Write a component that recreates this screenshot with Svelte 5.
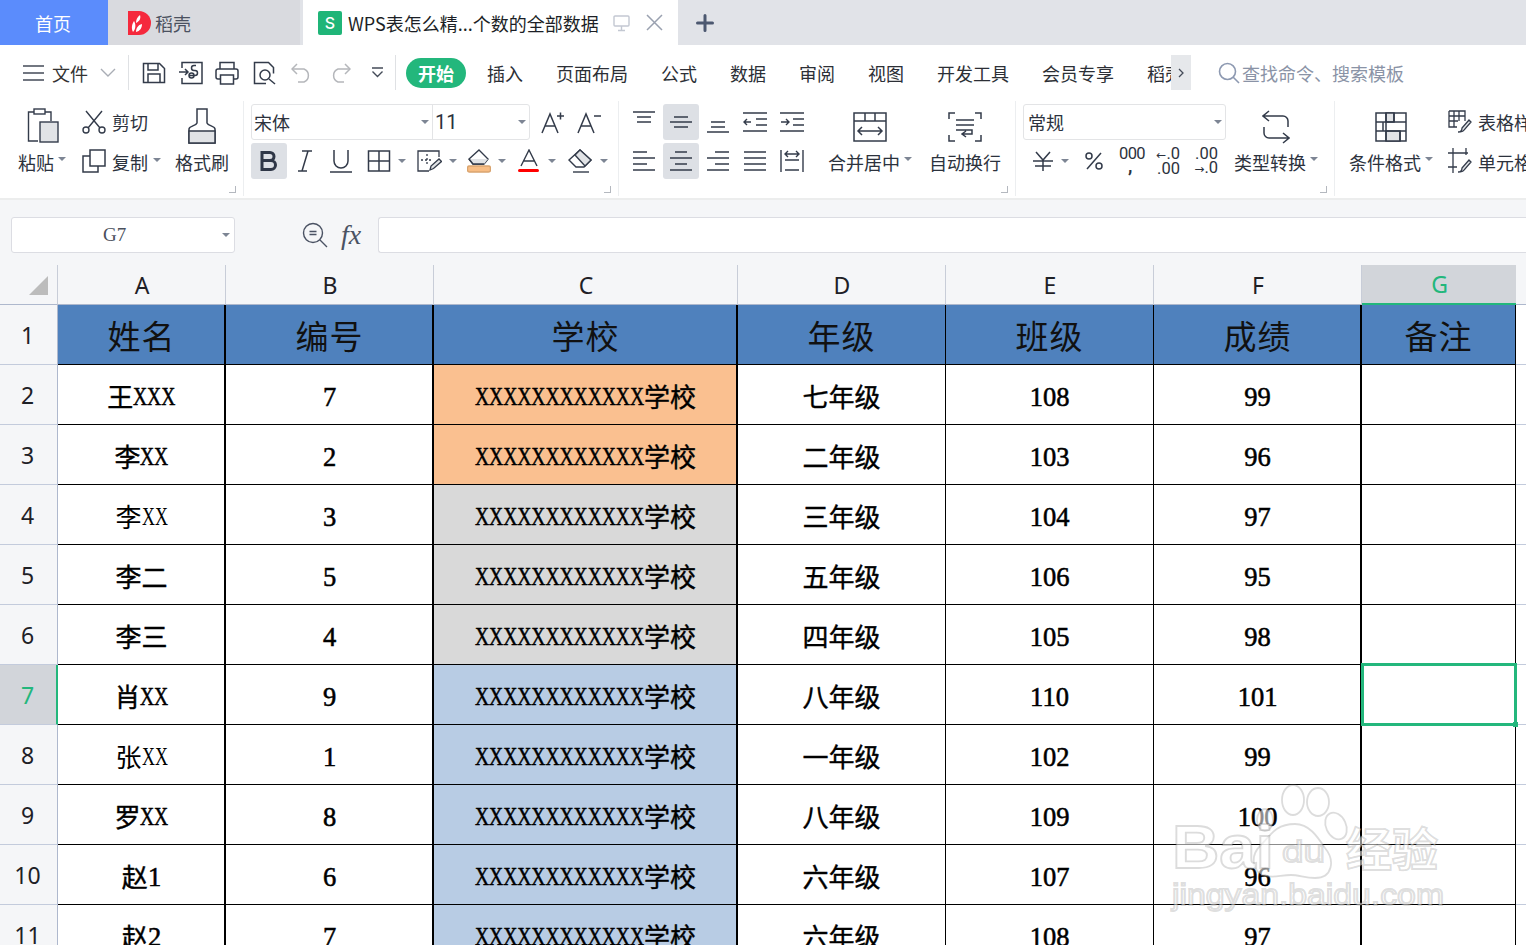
<script>
  const header = ['姓名', '编号', '学校', '年级', '班级', '成绩', '备注'];
  const school = 'XXXXXXXXXXXX学校';
  const rows = [
    { n: 2, a: '王XXX', b: '7', c: 'o', d: '七年级', e: '108', f: '99' },
    { n: 3, a: '李XX', b: '2', c: 'o', d: '二年级', e: '103', f: '96' },
    { n: 4, a: '李XX', b: '3', c: 'g', d: '三年级', e: '104', f: '97', thin: true },
    { n: 5, a: '李二', b: '5', c: 'g', d: '五年级', e: '106', f: '95' },
    { n: 6, a: '李三', b: '4', c: 'g', d: '四年级', e: '105', f: '98' },
    { n: 7, a: '肖XX', b: '9', c: 'b', d: '八年级', e: '110', f: '101', sel: true },
    { n: 8, a: '张XX', b: '1', c: 'b', d: '一年级', e: '102', f: '99', thin: true },
    { n: 9, a: '罗XX', b: '8', c: 'b', d: '八年级', e: '109', f: '100' },
    { n: 10, a: '赵1', b: '6', c: 'b', d: '六年级', e: '107', f: '96' },
    { n: 11, a: '赵2', b: '7', c: 'b', d: '六年级', e: '108', f: '97' }
  ];
  const cols = ['A', 'B', 'C', 'D', 'E', 'F', 'G'];
  const parts = (s) => s.split(/(X+|[0-9]+)/).filter(Boolean);
  const menus = ['插入', '页面布局', '公式', '数据', '审阅', '视图', '开发工具', '会员专享'];
</script>

{#snippet txt(s, thin)}
  {#each parts(s) as p}
    {#if p[0] === 'X'}
      <span class="xs" style="width:{p.length * (thin ? 13 : 14.1)}px"><span class="xi" class:xthin={thin}>{p}</span></span>
    {:else if /^[0-9]+$/.test(p)}
      <span class="num">{p}</span>
    {:else}
      <span class="cn" class:cnthin={thin}>{p}</span>
    {/if}
  {/each}
{/snippet}

<div class="page">
  <div class="tabs">
    <div class="tab home">首页</div>
    <div class="tab shell">
      <svg class="logo" width="24" height="24" viewBox="0 0 24 24"><path d="M0 0h11a12 12 0 0 1 0 24H0z" fill="#f5293d"/><path d="M5 21c-2-4-1-8 1-11 2 3 2 8-1 11zM8 21c0-4 2-7 6-8 0 4-2 7-6 8zM8 12c0-3 1-6 4-8 1 3 0 6-4 8z" fill="#fff"/></svg>
      <span>稻壳</span>
    </div>
    <div class="tab active">
      <span class="slogo">S</span>
      <span class="ttl">WPS表怎么精...个数的全部数据</span>
      <svg class="mon" width="18" height="18" viewBox="0 0 18 18" fill="none" stroke="#c3c8d2" stroke-width="1.4"><rect x="1" y="2" width="15" height="10" rx="1"/><path d="M8.5 12v4M5 16.5h7"/></svg>
      <svg class="cls" width="17" height="17" viewBox="0 0 17 17" fill="none" stroke="#9aa1b0" stroke-width="1.5"><path d="M1 1l15 15M16 1L1 16"/></svg>
    </div>
    <svg class="plus" width="18" height="18" viewBox="0 0 18 18" stroke="#4c5870" stroke-width="3" stroke-linecap="round"><path d="M9 1.5v15M1.5 9h15"/></svg>
  </div>

  <div class="menu">
    <svg class="m-ham" width="22" height="16" viewBox="0 0 22 16" stroke="#444b58" stroke-width="1.4"><path d="M0 1h21M0 8h21M0 15h21"/></svg>
    <span class="m-file">文件</span>
    <svg class="m-chev" width="16" height="9" viewBox="0 0 16 9" fill="none" stroke="#a9adb5" stroke-width="1.4"><path d="M1 1l7 7 7-7"/></svg>
    <i class="m-sep s1"></i>
    <svg class="qa q1" width="24" height="24" viewBox="0 0 24 24" fill="none" stroke="#333b4a" stroke-width="1.5"><path d="M1.5 2.5h16l5 5v14h-21z"/><path d="M6 3v6h10V3M6 21v-8h12v8"/></svg>
    <svg class="qa q2" width="25" height="24" viewBox="0 0 25 24" fill="none" stroke="#333b4a" stroke-width="1.5"><path d="M3 7V1.500h20v21H3V17"/><path d="M0 11h9M6 8l3 3-3 3"/><path d="M10 14.500h6a2.500 2.500 0 0 0 0-5h-1a2.500 2.500 0 0 1 0-5h2M10 14.500a2.500 2.500 0 1 0 5 0 2.500 2.500 0 1 0-5 0"/></svg>
    <svg class="qa q3" width="24" height="24" viewBox="0 0 24 24" fill="none" stroke="#333b4a" stroke-width="1.5"><path d="M5 8V1.500h14V8"/><rect x="1" y="8" width="22" height="10" rx="2"/><path d="M5.500 14h13v9h-13z" fill="#fff"/></svg>
    <svg class="qa q4" width="24" height="24" viewBox="0 0 24 24" fill="none" stroke="#333b4a" stroke-width="1.5"><path d="M13 22.500H1.500v-21h14l5 5v6"/><circle cx="12" cy="14" r="5"/><path d="M16 18l6 5"/></svg>
    <svg class="qa q5" width="22" height="20" viewBox="0 0 22 20" fill="none" stroke="#b5b7bb" stroke-width="1.5"><path d="M6 1L1 6l5 5"/><path d="M1 6h12a7 7 0 0 1 0 13H7"/></svg>
    <svg class="qa q6" width="22" height="20" viewBox="0 0 22 20" fill="none" stroke="#b5b7bb" stroke-width="1.500"><path d="M16 1l5 5-5 5"/><path d="M21 6H9a7 7 0 0 0 0 13h6"/></svg>
    <svg class="qa q7" width="13" height="11" viewBox="0 0 13 11" fill="none" stroke="#444b58" stroke-width="1.4"><path d="M1 1h11M1.500 4.500l5 5 5-5"/></svg>
    <i class="m-sep s2"></i>
    <span class="pill">开始</span>
    <div class="m-items">
      {#each menus as m}<span>{m}</span>{/each}
      <span class="clip">稻壳</span>
    </div>
    <span class="more"><svg width="6" height="10" viewBox="0 0 6 10" fill="none" stroke="#444b58" stroke-width="1.300"><path d="M1 1l4 4-4 4"/></svg></span>
    <svg class="s-ic" width="22" height="22" viewBox="0 0 22 22" fill="none" stroke="#8d99b1" stroke-width="1.600"><circle cx="9.500" cy="9.500" r="8"/><path d="M15 15l6 6"/></svg>
    <span class="s-tx">查找命令、搜索模板</span>
  </div>

  <div class="ribbon">
    <section class="grp g1">
      <div class="big c-paste">
        <svg class="ic" width="32" height="36" viewBox="0 0 32 36" fill="none" stroke="#333b4a" stroke-width="1.400"><path d="M11 33H1.500V4H24v9"/><rect x="7" y="1" width="11" height="5" fill="#fff"/><rect x="13" y="14" width="18" height="20" fill="#e1e3e6"/></svg>
        <div class="lb">粘贴<i class="car"></i></div>
      </div>
      <div class="c-cut">
        <div class="ln"><svg width="24" height="24" viewBox="0 0 24 24" fill="none" stroke="#333b4a" stroke-width="1.400"><circle cx="4" cy="20" r="3"/><circle cx="20" cy="20" r="3"/><path d="M6 18L20 1M18 18L4 1"/></svg><span>剪切</span></div>
        <div class="ln"><svg width="24" height="24" viewBox="0 0 24 24" fill="none" stroke="#333b4a" stroke-width="1.500"><rect x="8" y="1" width="15" height="16"/><path d="M8 7H1v16h15v-6"/></svg><span class="dn">复制</span><i class="car"></i></div>
      </div>
      <div class="big c-brush">
        <svg class="ic" width="28" height="36" viewBox="0 0 28 36" fill="none" stroke="#333b4a" stroke-width="1.500"><path d="M1 35V21c0-3 7-3 8-6V1h10v14c1 3 8 3 8 6v14z"/><path d="M1 23h26v12H1z" fill="#e1e3e6"/></svg>
        <div class="lb">格式刷</div>
      </div>
      <i class="corner"></i>
    </section>

    <section class="grp g2">
      <div class="ln1">
        <div class="fbox">
          <div class="f-name"><span>宋体</span><i class="car"></i></div>
          <div class="f-size"><span>11</span><i class="car"></i></div>
        </div>
        <svg class="a-up" width="24" height="24" viewBox="0 0 24 24" fill="none" stroke="#333b4a" stroke-width="1.500"><path d="M1 23L9 4l8 19M4 16h10M16 6h7M19.500 2.500v7"/></svg>
        <svg class="a-dn" width="24" height="24" viewBox="0 0 24 24" fill="none" stroke="#333b4a" stroke-width="1.500"><path d="M1 23L9 4l8 19M4 16h10M17 6h7"/></svg>
      </div>
      <div class="ln2">
        <span class="b36 on"><svg width="18" height="20" viewBox="0 0 18 20" fill="none" stroke="#2f3747" stroke-width="3"><path d="M2 1.500h8a4 4 0 0 1 0 8H2zM2 9.500h9a4.500 4.500 0 0 1 0 9H2z"/></svg></span>
        <span class="b36"><svg width="14" height="22" viewBox="0 0 14 22" fill="none" stroke="#333b4a" stroke-width="1.500"><path d="M4 1h10M0 21h9M10 1L4 21"/></svg></span>
        <span class="b36"><svg width="22" height="24" viewBox="0 0 22 24" fill="none" stroke="#333b4a" stroke-width="1.500"><path d="M4 1v11a7 7 0 0 0 14 0V1M0 23h22"/></svg></span>
        <span class="b50"><svg width="24" height="24" viewBox="0 0 24 24" fill="none" stroke="#333b4a" stroke-width="1.500"><rect x="1.500" y="2" width="21" height="20"/><path d="M12 2v20M1.500 12h21"/></svg><i class="car"></i></span>
        <span class="b50"><svg width="25" height="24" viewBox="0 0 25 24" fill="none" stroke="#333b4a" stroke-width="1.300"><path d="M12 22H1V2h21v6"/><path d="M4 11h12M10 5v12" stroke-dasharray="2 2"/><path d="M13 21l1-4 8-7 2.500 2.500-8 7z" fill="#e1e3e6"/></svg><i class="car"></i></span>
        <span class="b50"><svg width="24" height="24" viewBox="0 0 24 24" fill="none" stroke="#333b4a" stroke-width="1.400"><path d="M12 1l9 9-4 5H6l-4-5z"/><path d="M3 10h18l-4 5H6z" fill="#e1e3e6" stroke="none"/><path d="M2 10l4 5h11"/><rect x="0.500" y="17" width="23" height="6" rx="2" fill="#f8bd84" stroke="#d9a46f"/></svg><i class="car"></i></span>
        <span class="b50"><svg width="24" height="24" viewBox="0 0 24 24" fill="none"><path d="M4 17L12 1l8 16M6 12h12" stroke="#333b4a" stroke-width="1.400"/><rect x="1" y="20" width="21" height="3" rx="1.500" fill="#f00"/></svg><i class="car"></i></span>
        <span class="b50"><svg width="26" height="24" viewBox="0 0 26 24" fill="none" stroke="#333b4a" stroke-width="1.400"><path d="M13 1l11 10-7 7H9l-7-7z"/><path d="M8 6l10 11 6-6-11-10z" fill="#e1e3e6"/><path d="M6 23h16"/></svg><i class="car"></i></span>
      </div>
      <i class="corner"></i>
    </section>

    <section class="grp g3">
      <div class="agrid">
        <span><svg width="22" height="14" viewBox="0 0 22 14" stroke="#333b4a" stroke-width="1.400"><path d="M0 1h22M4 6h14M4 11h14"/></svg></span>
        <span class="on"><svg width="22" height="14" viewBox="0 0 22 14" stroke="#333b4a" stroke-width="1.400"><path d="M4 2h14M0 7h22M4 12h14"/></svg></span>
        <span class="low"><svg width="22" height="14" viewBox="0 0 22 14" stroke="#333b4a" stroke-width="1.400"><path d="M4 3h14M4 8h14M0 13h22"/></svg></span>
        <span><svg width="24" height="20" viewBox="0 0 24 20" fill="none" stroke="#333b4a" stroke-width="1.400"><path d="M0 1h24M13 7h11M13 13h11M0 19h24M8 10H1M4 7l-3 3 3 3"/></svg></span>
        <span><svg width="24" height="20" viewBox="0 0 24 20" fill="none" stroke="#333b4a" stroke-width="1.400"><path d="M0 1h24M13 7h11M13 13h11M0 19h24M1 10h8M6 7l3 3-3 3"/></svg></span>
        <span><svg width="22" height="20" viewBox="0 0 22 20" stroke="#333b4a" stroke-width="1.400"><path d="M0 1h14M0 7h22M0 13h14M0 19h22"/></svg></span>
        <span class="on"><svg width="22" height="20" viewBox="0 0 22 20" stroke="#333b4a" stroke-width="1.400"><path d="M5 1h12M0 7h22M5 13h12M0 19h22"/></svg></span>
        <span><svg width="22" height="20" viewBox="0 0 22 20" stroke="#333b4a" stroke-width="1.400"><path d="M8 1h14M0 7h22M8 13h14M0 19h22"/></svg></span>
        <span><svg width="22" height="20" viewBox="0 0 22 20" stroke="#333b4a" stroke-width="1.400"><path d="M0 1h22M0 7h22M0 13h22M0 19h22"/></svg></span>
        <span><svg width="24" height="22" viewBox="0 0 24 22" fill="none" stroke="#333b4a" stroke-width="1.400"><path d="M1 0v22M23 0v22M5 10h14M5 20h14M6 4h12M8 1L5 4l3 3M16 1l3 3-3 3"/></svg></span>
      </div>
      <div class="big c-merge">
        <svg class="ic low8" width="34" height="30" viewBox="0 0 34 30" fill="none" stroke="#333b4a" stroke-width="1.500"><rect x="1" y="1" width="32" height="28"/><path d="M1 9h32M12 1v8M22 1v8M5 19h24M9 15l-4 4 4 4M25 15l4 4-4 4"/></svg>
        <div class="lb">合并居中<i class="car"></i></div>
      </div>
      <div class="big c-wrap">
        <svg class="ic low8" width="34" height="30" viewBox="0 0 34 30" fill="none" stroke="#333b4a" stroke-width="1.500"><path d="M7 1H1v6M27 1h6v6M7 29H1v-6M27 29h6v-6M8 8h18M8 13h18M8 18h16v4h-9M18 19l-4 3 4 3"/></svg>
        <div class="lb">自动换行</div>
      </div>
      <i class="corner"></i>
    </section>

    <section class="grp g4">
      <div class="c-num">
        <div class="fbox nb"><span>常规</span><i class="car"></i></div>
        <div class="nrow">
          <span class="n-y"><svg width="20" height="20" viewBox="0 0 20 20" fill="none" stroke="#333b4a" stroke-width="1.500"><path d="M3 1l7 8 7-8M0 10h20M2 15h16M10 9v11"/></svg><i class="car"></i></span>
          <span class="n-p"><svg width="18" height="18" viewBox="0 0 18 18" fill="none" stroke="#333b4a" stroke-width="1.500"><circle cx="4" cy="4" r="3"/><circle cx="14" cy="14" r="3"/><path d="M16 1L2 17"/></svg></span>
          <span class="n-k"><b>000</b><b class="cm">,</b></span>
          <span class="n-d"><b><em>←</em>.0</b><b>.00</b></span>
          <span class="n-d n-i"><b>.00</b><b><em>→</em>.0</b></span>
        </div>
      </div>
      <div class="big c-conv">
        <svg class="ic low2" width="28" height="34" viewBox="0 0 28 34" fill="none" stroke="#333b4a" stroke-width="1.500"><path d="M7 1L1 6l6 5M1 6h20a5 5 0 0 1 5 5v6M21 33l6-5-6-5M27 28H7a5 5 0 0 1-5-5v-6"/></svg>
        <div class="lb">类型转换<i class="car"></i></div>
      </div>
      <i class="corner"></i>
    </section>

    <section class="grp g5">
      <div class="big c-cond">
        <svg class="ic low8" width="32" height="30" viewBox="0 0 32 30" fill="none" stroke="#333b4a" stroke-width="1.500"><rect x="1" y="1" width="30" height="28"/><path d="M11 1h8v9h-8zM11 19h14v10H11z" fill="#e1e3e6"/><path d="M1 10h30M1 19h30M11 1v28M19 1v9M8 10v9M25 19v10"/></svg>
        <div class="lb">条件格式<i class="car"></i></div>
      </div>
      <div class="c-tbl">
        <div class="ln"><svg width="24" height="24" viewBox="0 0 24 24" fill="none" stroke="#333b4a" stroke-width="1.300"><path d="M1 1h16v10M1 1v16h8M1 6h16M1 11h9M6 1v16M11 1v10"/><path d="M10 22c3 0 4-1 4-4l7-8 2 2-7 8c-1 2-3 2-6 2z" fill="#e1e3e6"/></svg><span class="sty">表格样式</span></div>
        <div class="ln"><svg width="24" height="26" viewBox="0 0 24 26" fill="none" stroke="#333b4a" stroke-width="1.300"><path d="M0 5h20M0 19h9M5 0v25M18 0v7"/><path d="M10 24c3 0 4-1 4-4l7-8 2 2-7 8c-1 2-3 2-6 2z" fill="#e1e3e6"/></svg><span class="sty dn">单元格样式</span></div>
      </div>
    </section>
  </div>

  <div class="fbar">
    <div class="namebox"><span>G7</span><i class="car"></i></div>
    <svg class="z-ic" width="26" height="26" viewBox="0 0 26 26" fill="none" stroke="#4a5263" stroke-width="1.400"><circle cx="11" cy="11" r="9.500"/><path d="M7.500 9.500h7M7.500 12.500h7M18 18l7 7"/></svg>
    <span class="fx">fx</span>
    <div class="finput"></div>
  </div>

  <div class="sheet">
    <div class="hc corner-c"><i class="tri"></i></div>
    {#each cols as c}
      <div class="hc ch" class:gc={c === 'G'}>{c}</div>
    {/each}
    <div class="hc tail"></div>

    <div class="rh">1</div>
    {#each header as h, i}
      <div class="cell head v{i}">{h}</div>
    {/each}
    <div class="tailc"></div>

    {#each rows as r}
      <div class="rh" class:cur={r.sel}>{r.n}</div>
      <div class="cell v0 data">{@render txt(r.a, r.thin)}</div>
      <div class="cell v1 data">{@render txt(r.b)}</div>
      <div class="cell v2 data {r.c}">{@render txt(school)}</div>
      <div class="cell v3 data">{@render txt(r.d)}</div>
      <div class="cell v4 data">{@render txt(r.e)}</div>
      <div class="cell v5 data">{@render txt(r.f)}</div>
      <div class="cell v6 data">
        {#if r.sel}<i class="selbox"><i class="handle"></i></i>{/if}
      </div>
      <div class="tailc"></div>
    {/each}
  </div>

  <svg class="wm" width="300" height="150" viewBox="0 0 300 150">
    <g fill="rgba(255,255,255,.55)" stroke="rgba(110,110,110,.24)" stroke-width="1.800">
      <ellipse cx="133" cy="22" rx="11" ry="15"/>
      <ellipse cx="158" cy="24" rx="11" ry="14"/>
      <ellipse cx="176" cy="48" rx="10" ry="14" transform="rotate(-25 176 48)"/>
      <ellipse cx="105" cy="42" rx="8" ry="11"/>
      <path d="M135 46c14 0 22 12 30 24 10 12 8 30-10 30-10 0-16-3-24-3-10 0-16 3-25 1-14-3-16-20-6-30 10-10 15-22 35-22z"/>
      <text x="12" y="90" font-family="'Liberation Sans',sans-serif" font-size="62" font-weight="700" textLength="102" lengthAdjust="spacingAndGlyphs">Bai</text>
      <text x="122" y="84" font-family="'Liberation Sans',sans-serif" font-size="30" textLength="43" lengthAdjust="spacingAndGlyphs">du</text>
      <text x="186" y="88" font-family="'Noto Sans CJK SC',sans-serif" font-size="46" font-weight="700">经验</text>
      <text x="12" y="127" font-family="'Liberation Sans',sans-serif" font-size="30" textLength="272" lengthAdjust="spacingAndGlyphs">jingyan.baidu.com</text>
    </g>
  </svg>
</div>

<style>
  :global(body) { margin: 0; background: #fff; }
  .page {
    position: relative;
    width: 1526px;
    height: 945px;
    overflow: hidden;
    font-family: "Noto Sans CJK SC", "Noto Sans", sans-serif;
    font-size: 18px;
    color: #2c323d;
    background: #fff;
  }
  i { font-style: normal; display: block; }

  .tabs { display: flex; align-items: center; height: 45px; background: #e1e3e8; }
  .tab { height: 45px; display: flex; align-items: center; box-sizing: border-box; }
  .home { width: 108px; background: #5b8cfc; color: #fff; justify-content: center; padding-right: 2px; }
  .shell { width: 195px; background: #d9dadf; padding-left: 20px; border-right: 3px solid #e1e3e8; color: #4b5160; }
  .shell span { margin-left: 3px; }
  .logo { flex: none; }
  .active { width: 375px; background: #fff; padding-left: 15px; color: #1c1f26; }
  .slogo {
    width: 24px; height: 24px; border-radius: 2px; background: #1fb578; color: #fff;
    font: 500 16px/24px "Inter", sans-serif; text-align: center; flex: none;
  }
  .ttl { margin-left: 6px; white-space: nowrap; width: 253px; letter-spacing: 0; }
  .mon { margin-left: 12px; }
  .cls { margin-left: 15px; }
  .plus { margin-left: 18px; }

  .menu { display: flex; align-items: center; height: 55px; padding-left: 23px; }
  .menu > * { flex: none; }
  .m-file { margin-left: 7px; color: #333; }
  .m-chev { margin-left: 12px; }
  .m-sep { width: 1px; height: 35px; background: #dfe1e4; }
  .s1 { margin-left: 12px; }
  .q1 { margin-left: 13px; }
  .q2 { margin-left: 13px; }
  .q3 { margin-left: 11px; }
  .q4 { margin-left: 14px; }
  .q5 { margin-left: 14px; }
  .q6 { margin-left: 16px; }
  .q7 { margin-left: 20px; }
  .s2 { margin-left: 11px; }
  .pill {
    margin-left: 10px; width: 60px; height: 30px; border-radius: 15px; background: #23b77c;
    color: #fff; text-align: center; line-height: 30px; font-weight: 700;
  }
  .m-items { display: flex; gap: 33px; margin-left: 21px; width: 684px; overflow: hidden; color: #2c2f36; white-space: nowrap; }
  .clip { width: 24px; overflow: hidden; }
  .more { width: 20px; height: 35px; background: #e6e8eb; display: flex; align-items: center; justify-content: center; }
  .s-ic { margin-left: 27px; }
  .s-tx { margin-left: 2px; color: #8a93a6; white-space: nowrap; }

  .ribbon { display: flex; height: 100px; box-sizing: border-box; border-bottom: 2px solid #eceded; }
  .grp { position: relative; box-sizing: border-box; height: 95px; margin-top: 1px; padding-top: 3px; border-right: 1px solid #eceef0; display: flex; flex: none; }
  .big { display: grid; grid-template-rows: 36px 36px; row-gap: 3px; justify-items: center; align-items: center; }
  .ic { align-self: start; margin-top: 4px; }
  .low8 { margin-top: 8px; }
  .low2 { margin-top: 6px; }
  .lb { display: flex; align-items: center; white-space: nowrap; line-height: 36px; padding-top: 2px; }
  .lb .car { margin-left: 4px; margin-bottom: 6px; }
  .car { width: 0; height: 0; border: 4px solid transparent; border-top: 4px solid #7d8594; border-bottom: 0; flex: none; }
  .corner {
    position: absolute; right: 7px; bottom: 3px; width: 6px; height: 6px;
    border-right: 1.500px solid #b4b8bf; border-bottom: 1.500px solid #b4b8bf;
  }

  .g1 { width: 244px; padding-left: 18px; }
  .c-paste { width: 64px; justify-items: start; }
  .c-paste .ic { margin-left: 9px; }
  .c-cut { width: 93px; display: grid; grid-template-rows: 36px 36px; row-gap: 3px; }
  .c-brush { width: 54px; }
  .ln { display: flex; align-items: center; white-space: nowrap; }
  .ln span { margin-left: 6px; }
  .ln .dn { padding-top: 2px; }
  .ln .car { margin-left: 5px; margin-bottom: 2px; }

  .g2 { width: 375px; padding-left: 7px; display: block; }
  .ln1 { display: flex; align-items: center; height: 36px; margin-bottom: 3px; }
  .fbox { display: flex; box-sizing: border-box; height: 36px; border: 1px solid #e3e4e6; border-radius: 3px; align-items: center; background: #fff; }
  .ln1 .fbox { width: 279px; }
  .f-name { width: 181px; display: flex; justify-content: space-between; align-items: center; box-sizing: border-box; padding: 0 3px 0 2px; height: 100%; border-right: 1px solid #e3e4e6; }
  .f-size { flex: 1; display: flex; justify-content: space-between; align-items: center; padding: 0 3px 0 2px; font-family: "Roboto", sans-serif; font-size: 20px; }
  .a-up { margin-left: 11px; }
  .a-dn { margin-left: 12px; }
  .ln2 { display: flex; height: 36px; align-items: center; }
  .b36 { width: 36px; height: 36px; display: flex; align-items: center; justify-content: center; border-radius: 3px; }
  .b36.on { background: #dde0e5; }
  .b50 { width: 50px; height: 36px; display: flex; align-items: center; padding-left: 8px; box-sizing: border-box; gap: 7px; }

  .g3 { width: 397px; padding-left: 7px; }
  .agrid { display: grid; grid-template-columns: repeat(5, 37px); grid-template-rows: 36px 36px; row-gap: 3px; width: 185px; }
  .agrid span { width: 36px; height: 36px; display: flex; align-items: center; justify-content: center; border-radius: 3px; }
  .agrid .on { background: #dde0e5; }
  .agrid .low { padding-top: 8px; box-sizing: border-box; }
  .agrid span:first-child { padding-bottom: 8px; box-sizing: border-box; }
  .c-merge { margin-left: 17px; width: 84px; }
  .c-wrap { margin-left: 17px; width: 72px; }

  .g4 { width: 319px; padding-left: 7px; }
  .c-num { width: 203px; }
  .nb { width: 203px; justify-content: space-between; padding: 0 3px 0 4px; margin-bottom: 3px; }
  .nrow { display: flex; height: 36px; align-items: center; padding-left: 10px; }
  .n-y { display: flex; align-items: center; gap: 8px; width: 52px; }
  .n-p { width: 34px; display: flex; }
  .n-k { width: 36px; position: relative; height: 28px; font-family: "Roboto", sans-serif; }
  .n-k b { display: block; font-weight: 400; font-size: 16.500px; line-height: 14px; letter-spacing: -.6px; }
  .n-k .cm { position: absolute; left: 9px; top: 12px; font-weight: 700; font-size: 18px; }
  .n-d { width: 38px; height: 28px; display: flex; flex-direction: column; align-items: flex-end; padding-right: 13px; box-sizing: border-box; font-family: "Roboto", sans-serif; }
  .n-d b { display: block; font-weight: 400; font-size: 16.500px; line-height: 14px; white-space: nowrap; }
  .n-d em { font-style: normal; font-family: "DejaVu Sans", sans-serif; font-size: 12px; }
  .n-i { width: 25px; padding-right: 0; }
  .c-conv { margin-left: 8px; width: 84px; }

  .g5 { flex: 1; padding-left: 14px; border-right: 0; overflow: hidden; white-space: nowrap; }
  .c-cond { width: 83px; }
  .c-tbl { margin-left: 16px; display: grid; grid-template-rows: 36px 36px; row-gap: 3px; }

  .fbar { display: flex; align-items: center; height: 65px; background: #f5f6f8; padding: 5px 0 0 11px; box-sizing: border-box; }
  .namebox {
    width: 224px; height: 36px; background: #fff; border: 1px solid #dcdde3; border-radius: 3px; box-sizing: border-box;
    display: flex; align-items: center; justify-content: space-between; padding: 0 4px 0 91px;
    font: 19px "Liberation Serif", serif; color: #4a505c;
  }
  .z-ic { margin-left: 67px; flex: none; }
  .fx { margin-left: 13px; width: 24px; font: italic 28px "Liberation Serif", serif; color: #4a5263; line-height: 36px; }
  .finput { margin-left: 13px; flex: 1; height: 36px; background: #fff; border: 1px solid #dcdde3; border-right: 0; border-radius: 3px 0 0 3px; box-sizing: border-box; }

  .sheet {
    display: grid;
    grid-template-columns: 58px 168px 208px 304px 208px 208px 208px 154px 10px;
    grid-template-rows: 40px repeat(11, 60px);
  }
  .hc { background: #f5f6f8; box-sizing: border-box; border-bottom: 1px solid #aeb8cd; }
  .corner-c { position: relative; border-right: 1px solid #c8cdd8; }
  .tri {
    position: absolute; left: 29px; top: 11px; width: 0; height: 0;
    border-left: 19px solid transparent; border-bottom: 19px solid #bcbcbc;
  }
  .ch {
    display: flex; align-items: center; justify-content: center; padding-left: 1px;
    font: 23px "Noto Sans", sans-serif; color: #1e2026; border-right: 1px solid #c8cdd8;
  }
  .ch.gc { background: #d2d5da; color: #23b77c; border-bottom: 2px solid #23b77c; border-right: 0; }
  .rh {
    display: flex; align-items: center; justify-content: center; box-sizing: border-box;
    background: #f5f6f8; font: 23px "Noto Sans", sans-serif; color: #1e2026; padding-right: 2px;
    border-bottom: 1px solid #c3cbdc; border-right: 1px solid #aeb8cd;
  }
  .rh.cur { background: #d2d5da; color: #23b77c; border-right: 2px solid #23b77c; padding-right: 1px; }
  .tailc { box-sizing: border-box; border-bottom: 1px solid #c3cbdc; }
  .cell {
    box-sizing: border-box; display: flex; align-items: center; justify-content: center;
    border-bottom: 1px solid #000; border-right: 2px solid #000; white-space: nowrap; color: #000;
    position: relative; padding-left: 1px;
  }
  .v3, .v4, .v6 { border-right-width: 1px; padding-left: 0; }
  .head { background: #4f81bd; font-size: 33px; letter-spacing: 1px; color: #111; }
  .data { padding-top: 5px; }
  .o { background: #fac090; }
  .g { background: #d9d9d9; }
  .b { background: #b8cce4; }
  .cn { font-size: 26px; font-weight: 400; -webkit-text-stroke: .4px #000; margin-bottom: 3px; }
  .cnthin { -webkit-text-stroke: 0; }
  .num { font: 400 26.500px "Liberation Serif", serif; -webkit-text-stroke: .55px #000; }
  .xs { display: inline-block; height: 30px; position: relative; overflow: visible; }
  .xi {
    position: absolute; left: 0; top: 0; transform: scaleX(.75); transform-origin: left top;
    font: 400 26px/30px "Liberation Serif", serif; -webkit-text-stroke: .5px #000;
  }
  .xthin { transform: scaleX(.69); -webkit-text-stroke: 0; }
  .selbox {
    position: absolute; left: -1px; top: -2px; width: 156px; height: 63px;
    border: 3px solid #23b77c; box-sizing: border-box; z-index: 3;
  }
  .handle { position: absolute; right: -4px; bottom: -4px; width: 5px; height: 5px; background: #23b77c; }

  .wm { position: absolute; left: 1160px; top: 778px; pointer-events: none; z-index: 5; }
</style>
